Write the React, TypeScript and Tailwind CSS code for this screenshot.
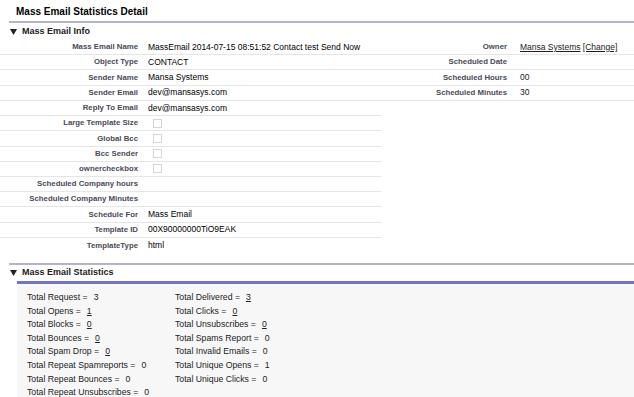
import React from "react";

type Row = { l: string; v?: React.ReactNode; cb?: boolean; rl?: string; rv?: React.ReactNode; full?: boolean };

const Check = () => (
  <span className="inline-block ml-[5px] w-[9px] h-[9px] border border-[#d6d6d6] bg-white" />
);

const rows: Row[] = [
  {
    l: "Mass Email Name",
    v: "MassEmail 2014-07-15 08:51:52 Contact test Send Now",
    rl: "Owner",
    rv: (
      <span>
        <span className="underline">Mansa Systems</span> <span className="underline">[Change]</span>
      </span>
    ),
    full: true,
  },
  { l: "Object Type", v: "CONTACT", rl: "Scheduled Date", rv: "", full: true },
  { l: "Sender Name", v: "Mansa Systems", rl: "Scheduled Hours", rv: "00", full: true },
  { l: "Sender Email", v: "dev@mansasys.com", rl: "Scheduled Minutes", rv: "30", full: true },
  { l: "Reply To Email", v: "dev@mansasys.com" },
  { l: "Large Template Size", cb: true },
  { l: "Global Bcc", cb: true },
  { l: "Bcc Sender", cb: true },
  { l: "ownercheckbox", cb: true },
  { l: "Scheduled Company hours" },
  { l: "Scheduled Company Minutes" },
  { l: "Schedule For", v: "Mass Email" },
  { l: "Template ID", v: "00X90000000TiO9EAK" },
  { l: "TemplateType", v: "html" },
];

const Tri = () => (
  <svg width="7" height="6" viewBox="0 0 7 6" className="mr-[5px]">
    <polygon points="0,0 7,0 3.5,6" fill="#222" />
  </svg>
);

type Stat = { l: string; v: string; u?: boolean };
const left: Stat[] = [
  { l: "Total Request", v: "3" },
  { l: "Total Opens", v: "1", u: true },
  { l: "Total Blocks", v: "0", u: true },
  { l: "Total Bounces", v: "0", u: true },
  { l: "Total Spam Drop", v: "0", u: true },
  { l: "Total Repeat Spamreports", v: "0" },
  { l: "Total Repeat Bounces", v: "0" },
  { l: "Total Repeat Unsubscribes", v: "0" },
];
const right: Stat[] = [
  { l: "Total Delivered", v: "3", u: true },
  { l: "Total Clicks", v: "0", u: true },
  { l: "Total Unsubscribes", v: "0", u: true },
  { l: "Total Spams Report", v: "0" },
  { l: "Total Invalid Emails", v: "0" },
  { l: "Total Unique Opens", v: "1" },
  { l: "Total Unique Clicks", v: "0" },
];

const StatLine = ({ s }: { s: Stat }) => (
  <div className="h-[13.6px] leading-[13.6px] whitespace-nowrap">
    {s.l} =<span className={"ml-[6px] " + (s.u ? "underline" : "")}>{s.v}</span>
  </div>
);

export default function App() {
  return (
    <div
      className="w-[634px] h-[397px] overflow-hidden bg-white text-black"
      style={{ fontFamily: '"Liberation Sans", Arial, sans-serif' }}
    >
      <div className="h-[21px] pl-[16px] pt-[5px] text-[10px] leading-[14px] font-bold">
        Mass Email Statistics Detail
      </div>
      <div className="ml-[9px] h-[2px] bg-[#b4b4c8]" />
      <div className="h-[16px] flex items-center pl-[10px] text-[9px] font-bold text-[#222] pt-[2px]">
        <Tri />
        Mass Email Info
      </div>
      <div className="text-[8.5px] pt-[1px]">
        {rows.map((r, i) => {
          const last = i === rows.length - 1;
          return (
            <div key={i} className="flex h-[15.23px]">
              <div
                className={
                  "w-[381px] flex items-center " + (last ? "" : "border-b border-[#e6e6e6]")
                }
              >
                <div className="w-[138px] text-right font-bold text-[7.8px] text-[#4a4a56] whitespace-nowrap">
                  {r.l}
                </div>
                <div className="ml-[10px] whitespace-nowrap flex items-center">
                  {r.cb ? <Check /> : r.v}
                </div>
              </div>
              {r.full && (
                <div className="flex-1 flex items-center border-b border-[#e6e6e6]">
                  <div className="w-[126px] text-right font-bold text-[7.8px] text-[#4a4a56] whitespace-nowrap">
                    {r.rl}
                  </div>
                  <div className="ml-[13px] whitespace-nowrap text-[#222]">{r.rv}</div>
                </div>
              )}
            </div>
          );
        })}
      </div>
      <div className="ml-[9px] mt-[10px] h-[2px] bg-[#b4b4c8]" />
      <div className="h-[16px] flex items-center pl-[10px] text-[9px] font-bold text-[#222]">
        <Tri />
        Mass Email Statistics
      </div>
      <div className="ml-[17px] h-[120px] bg-[#f7f7f8] border-t-[3px] border-[#7575b9] pt-[7px] pl-[10px] flex text-[8.7px] text-[#222]">
        <div className="w-[148px]">
          {left.map((s, i) => (
            <StatLine key={i} s={s} />
          ))}
        </div>
        <div>
          {right.map((s, i) => (
            <StatLine key={i} s={s} />
          ))}
        </div>
      </div>
    </div>
  );
}
